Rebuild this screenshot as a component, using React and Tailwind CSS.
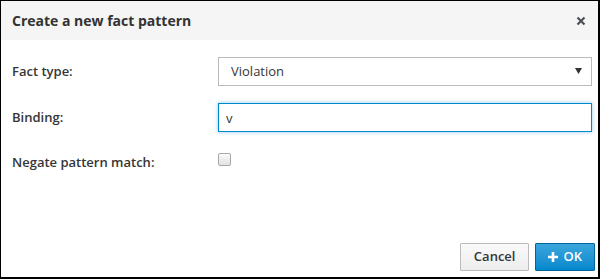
import React, { useState } from 'react';

const App = () => {
  const [factType, setFactType] = useState('Violation');
  const [binding, setBinding] = useState('v');
  const [negate, setNegate] = useState(false);

  return (
    <div
      className="w-[600px] h-[279px] bg-white border-black border-l border-t border-r-2 border-b-2 flex flex-col text-[#363636]"
      style={{ fontFamily: '"Open Sans", "Liberation Sans", sans-serif' }}
    >
      {/* header */}
      <div className="h-[39px] shrink-0 bg-[#f5f5f5] flex items-center justify-between pl-[11px] pr-[10px]">
        <h4 className="text-[14px] font-bold text-[#333]">Create a new fact pattern</h4>
        <button className="text-[#4d5258] text-[15px] font-bold leading-none w-[14px] h-[14px] flex items-center justify-center">
          <svg width="10" height="10" viewBox="0 0 10 10">
            <path d="M1.5 1.5 L8.5 8.5 M8.5 1.5 L1.5 8.5" stroke="#4d5258" strokeWidth="2.2" strokeLinecap="butt" />
          </svg>
        </button>
      </div>

      {/* body */}
      <div className="flex-1 pt-[17px] pl-[11px] pr-[6px]">
        <div className="flex items-center h-[29px]">
          <label className="w-[206px] text-[13px] font-semibold text-[#363636]">Fact type:</label>
          <div className="relative flex-1">
            <select
              value={factType}
              onChange={(e) => setFactType(e.target.value)}
              className="appearance-none w-full h-[29px] border border-[#bbb] bg-white pl-[12px] text-[13px] text-[#363636] outline-none"
            >
              <option>Violation</option>
              <option>Person</option>
            </select>
            <span className="absolute right-[10px] top-[11px] pointer-events-none">
              <svg width="7" height="6" viewBox="0 0 7 6">
                <path d="M0 0 L7 0 L3.5 6 Z" fill="#333" />
              </svg>
            </span>
          </div>
        </div>

        <div className="flex items-center h-[29px] mt-[17px]">
          <label className="w-[206px] text-[13px] font-semibold text-[#363636]">Binding:</label>
          <input
            value={binding}
            onChange={(e) => setBinding(e.target.value)}
            className="flex-1 h-[29px] border border-[#0088ce] pl-[7px] text-[13px] text-[#363636] outline-none shadow-[0_0_4px_rgba(0,136,206,0.45)]"
          />
        </div>

        <div className="flex items-center h-[29px] mt-[16px]">
          <label className="w-[206px] text-[13px] font-semibold text-[#363636]">Negate pattern match:</label>
          <input
            type="checkbox"
            checked={negate}
            onChange={(e) => setNegate(e.target.checked)}
            className="appearance-none w-[13px] h-[13px] border border-[#a8a8a8] rounded-[2px] bg-gradient-to-b from-[#fafafa] to-[#e2e2e2] -mt-[6px]"
          />
        </div>
      </div>

      {/* footer */}
      <div className="shrink-0 flex justify-end gap-[6px] pr-[3px] pb-[6px]">
        <button className="h-[28px] px-[13px] border border-[#bbb] rounded-[1px] bg-gradient-to-b from-[#fafafa] to-[#ededed] text-[13px] text-[#363636] font-semibold">
          Cancel
        </button>
        <button className="h-[28px] px-[12px] border border-[#00659c] rounded-[1px] bg-gradient-to-b from-[#39a5dc] to-[#0088ce] text-[13px] text-white font-semibold flex items-center gap-[5px]">
          <svg width="10" height="10" viewBox="0 0 10 10">
            <path d="M5 0 V10 M0 5 H10" stroke="white" strokeWidth="2.6" />
          </svg>
          OK
        </button>
      </div>
    </div>
  );
};

export default App;
